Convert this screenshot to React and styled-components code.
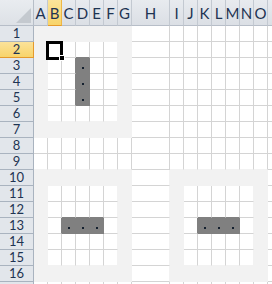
import React from 'react'
import styled, { createGlobalStyle } from 'styled-components'

const GlobalStyle = createGlobalStyle`
    html, body {
        margin: 0;
        padding: 0;
        background: #fff;
        overflow: hidden;
    }
    body {
        font-family: Lato, "Open Sans", sans-serif;
    }
`

const COLS = ['A','B','C','D','E','F','G','H','I','J','K','L','M','N','O','P']
const ROWS = Array.from({ length: 17 }, (_, i) => i + 1)

const GRID = '#d4d4d4'
const LIGHT = '#f2f2f2'
const DARK = '#808080'

const inBox = (r, c, r1, r2, c1, c2) => r >= r1 && r <= r2 && c >= c1 && c <= c2

const fillAt = (r, c) => {
    if (inBox(r, c, 3, 5, 3, 3)) return DARK
    if (inBox(r, c, 13, 13, 2, 4)) return DARK
    if (inBox(r, c, 13, 13, 10, 12)) return DARK
    if (inBox(r, c, 1, 7, 0, 6) && !inBox(r, c, 2, 6, 1, 5)) return LIGHT
    if (inBox(r, c, 10, 16, 0, 6) && !inBox(r, c, 11, 15, 1, 5)) return LIGHT
    if (inBox(r, c, 10, 16, 8, 14) && !inBox(r, c, 11, 15, 9, 13)) return LIGHT
    return null
}

const edge = (a, b) => a || b || GRID

const Sheet = styled.div`
    position: relative;
    width: 272px;
    height: 284px;
    overflow: hidden;
    display: grid;
    grid-template-columns: 34px repeat(7, 14px) 38px repeat(8, 14px);
    grid-template-rows: 26px repeat(17, 16px);
`

const Corner = styled.div`
    box-sizing: border-box;
    display: flex;
    align-items: flex-end;
    justify-content: flex-end;
    padding: 0 2px 2px 0;
    background: linear-gradient(#e9ecf0, #dde1e6);
    border-right: 1px solid #b7bec8;
    border-bottom: 1px solid #b7bec8;

    &::after {
        content: '';
        width: 0;
        height: 0;
        border-left: 15px solid transparent;
        border-bottom: 15px solid #c4c9cf;
    }
`

const ColHead = styled.div`
    box-sizing: border-box;
    display: flex;
    align-items: center;
    justify-content: center;
    overflow: hidden;
    padding-top: 2px;
    font-size: 15px;
    line-height: 15px;
    color: #1e3452;
    background: ${p => p.$active
        ? 'linear-gradient(#fbe49b, #f8d46a)'
        : 'linear-gradient(#e8ebef, #dbdfe5)'};
    border-right: 1px solid ${p => p.$active ? '#efb744' : '#c3c9d1'};
    border-bottom: 1px solid ${p => p.$active ? '#e59a2c' : '#b7bec8'};
`

const RowHead = styled.div`
    box-sizing: border-box;
    display: flex;
    align-items: center;
    justify-content: center;
    overflow: hidden;
    font-size: 13px;
    line-height: 13px;
    color: #1e3452;
    background: ${p => p.$active ? 'linear-gradient(#fbe29a, #f8d46a)' : '#e2e6eb'};
    border-right: 1px solid ${p => p.$active ? '#e59a2c' : '#a9b3bf'};
    border-bottom: 1px solid ${p => p.$active ? '#e59a2c' : '#a9b3bf'};
`

const Cell = styled.div`
    box-sizing: border-box;
    display: flex;
    align-items: flex-end;
    justify-content: center;
    padding-bottom: 4px;
    background: ${p => p.$fill || '#fff'};
    border-right: 1px solid ${p => p.$right};
    border-bottom: 1px solid ${p => p.$bottom};
`

const Dot = styled.span`
    width: 2px;
    height: 2px;
    background: #14202e;
`

const Selection = styled.div`
    position: absolute;
    left: 46px;
    top: 41px;
    width: 17px;
    height: 19px;
    box-sizing: border-box;
    border: 3px solid #000;
`

const Handle = styled.div`
    position: absolute;
    left: 59px;
    top: 55px;
    width: 6px;
    height: 6px;
    box-sizing: border-box;
    background: #000;
    border: 1px solid #fff;
`

export default function App() {
    return (
        <>
            <GlobalStyle />
            <Sheet>
                <Corner />
                {COLS.map(c => (
                    <ColHead key={c} $active={c === 'B'}>{c === 'P' ? '' : c}</ColHead>
                ))}
                {ROWS.map(r => (
                    <React.Fragment key={r}>
                        <RowHead $active={r === 2}>{r < 17 ? r : ''}</RowHead>
                        {COLS.map((_, c) => {
                            const fill = fillAt(r, c)
                            return (
                                <Cell
                                    key={c}
                                    $fill={fill}
                                    $right={edge(fill, fillAt(r, c + 1))}
                                    $bottom={edge(fill, fillAt(r + 1, c))}
                                >
                                    {fill === DARK && <Dot />}
                                </Cell>
                            )
                        })}
                    </React.Fragment>
                ))}
                <Selection />
                <Handle />
            </Sheet>
        </>
    )
}
